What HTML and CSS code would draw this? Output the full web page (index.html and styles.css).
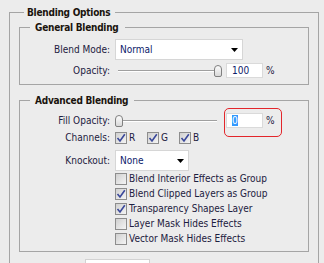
FILE: index.html
```html
<!DOCTYPE html>
<html lang="en">
<head>
  <meta charset="UTF-8">
  <title>Blending Options</title>
  <meta name="viewport" content="width=device-width, initial-scale=1.0">
  <link rel="stylesheet" href="styles.css">
</head>
<body>

  <fieldset class="group outer">
    <legend>Blending Options</legend>

    <fieldset class="group">
      <legend>General Blending</legend>
      <div class="rows general">
        <div class="row">
          <span class="label">Blend Mode:</span>
          <div class="select wide">
            <span>Normal</span>
            <svg class="arrow" width="7" height="4" viewBox="0 0 7 4"><polygon points="0,0 7,0 3.5,4"/></svg>
          </div>
        </div>
        <div class="row">
          <span class="label">Opacity:</span>
          <div class="slider"><span class="thumb" style="left: 99px"></span></div>
          <span class="field">100</span>
          <span class="unit">%</span>
        </div>
      </div>
    </fieldset>

    <fieldset class="group advanced-group">
      <legend>Advanced Blending</legend>
      <div class="rows advanced">
        <div class="row">
          <span class="label">Fill Opacity:</span>
          <div class="slider"><span class="thumb" style="left: 0px"></span></div>
          <span class="marked">
            <span class="field"><span class="sel">0</span></span>
            <span class="unit">%</span>
          </span>
        </div>
        <div class="row channels-row">
          <span class="label">Channels:</span>
          <span class="chan">
            <span class="box"><svg viewBox="0 0 10 10"><path d="M1.5 5 L4 8 L8.8 1.2"/></svg></span>R
          </span>
          <span class="chan">
            <span class="box"><svg viewBox="0 0 10 10"><path d="M1.5 5 L4 8 L8.8 1.2"/></svg></span>G
          </span>
          <span class="chan">
            <span class="box"><svg viewBox="0 0 10 10"><path d="M1.5 5 L4 8 L8.8 1.2"/></svg></span>B
          </span>
        </div>
        <div class="row knock-row">
          <span class="label">Knockout:</span>
          <div class="select narrow">
            <span>None</span>
            <svg class="arrow" width="7" height="4" viewBox="0 0 7 4"><polygon points="0,0 7,0 3.5,4"/></svg>
          </div>
        </div>
        <div class="checks">
          <div class="check"><span class="box"></span>Blend Interior Effects as Group</div>
          <div class="check"><span class="box"><svg viewBox="0 0 10 10"><path d="M1.5 5 L4 8 L8.8 1.2"/></svg></span>Blend Clipped Layers as Group</div>
          <div class="check"><span class="box"><svg viewBox="0 0 10 10"><path d="M1.5 5 L4 8 L8.8 1.2"/></svg></span>Transparency Shapes Layer</div>
          <div class="check"><span class="box"></span>Layer Mask Hides Effects</div>
          <div class="check"><span class="box"></span>Vector Mask Hides Effects</div>
        </div>
      </div>
    </fieldset>

    <div class="button-stub"></div>
  </fieldset>

</body>
</html>
```

FILE: styles.css
```css
html {
  overflow: hidden;
}

body {
  margin: 0;
  background: #ececec;
  font-family: "DejaVu Sans Condensed", "Liberation Sans", sans-serif;
  font-size: 10px;
  line-height: 12px;
  color: #1c2040;
}

.group {
  margin: 0 9px;
  padding: 0;
  border: 1px solid #a5a5a5;
  min-width: 0;
}

.group legend {
  margin-left: 10px;
  padding: 0 6px 0 5px;
  line-height: 15px;
  font-weight: bold;
  letter-spacing: -0.25px;
  color: #1a140e;
}

.outer {
  width: 310px;
  box-sizing: border-box;
  margin: 5px 0 0 9px;
}

.outer > legend {
  margin-left: 14px;
  padding: 0 5px 0 3px;
}

.advanced-group {
  margin-top: 8px;
}

.rows {
  display: flex;
  flex-direction: column;
}

.general {
  padding: 4px 0 6px;
  gap: 3px;
}

.advanced {
  padding: 5px 0 5px;
}

.row {
  display: flex;
  align-items: center;
}

.label {
  width: 90px;
  margin-right: 5px;
  text-align: right;
}

.channels-row {
  margin-top: 4px;
}

.knock-row {
  margin-top: 6px;
}

/* dropdowns */
.select {
  box-sizing: border-box;
  height: 21px;
  display: flex;
  align-items: center;
  justify-content: space-between;
  padding: 0 4px;
  background: #fff;
  border: 1px solid #d6d6d6;
  color: #0c1a6a;
}

.select.wide {
  width: 128px;
}

.select.narrow {
  width: 74px;
}

.arrow {
  fill: #000;
  margin-top: 1px;
}

/* sliders */
.slider {
  position: relative;
  width: 107px;
  height: 15px;
  margin-right: 4px;
  background:
    linear-gradient(#9f9f9f, #9f9f9f) 3px 7px / 99px 1px no-repeat,
    linear-gradient(#fff, #fff) 3px 8px / 99px 1px no-repeat;
}

.thumb {
  position: absolute;
  top: 2px;
  width: 8px;
  height: 12px;
  box-sizing: border-box;
  border: 1px solid #808080;
  border-radius: 4px 4px 2px 2px;
  background: linear-gradient(#fdfdfd, #d8d8d8);
}

.field {
  box-sizing: border-box;
  width: 37px;
  height: 15px;
  padding-left: 5px;
  line-height: 13px;
  background: #fff;
  border: 1px solid #dadada;
  color: #0c1a6a;
}

.sel {
  background: #3399ff;
  color: #fff;
}

.unit {
  margin-left: 3px;
}

.marked {
  position: relative;
  display: flex;
  align-items: center;
}

.marked::after {
  content: "";
  position: absolute;
  top: -5px;
  bottom: -9px;
  left: -2px;
  right: -7px;
  border: 1px solid #e3262b;
  border-radius: 5px;
}

/* checkboxes */
.box {
  flex: none;
  display: flex;
  width: 12px;
  height: 12px;
  box-sizing: border-box;
  border: 1px solid #8d8d8d;
  background: linear-gradient(135deg, #d0d0d0, #f4f4f4);
}

.box svg {
  width: 10px;
  height: 10px;
}

.box path {
  fill: none;
  stroke: #3a489a;
  stroke-width: 1.6;
}

.chan {
  display: flex;
  align-items: center;
  gap: 2px;
  width: 32px;
}

.checks {
  margin-left: 95px;
}

.check {
  display: flex;
  align-items: center;
  gap: 2px;
  height: 15px;
}

.button-stub {
  margin: 7px 0 0 75px;
  width: 65px;
  height: 20px;
  box-sizing: border-box;
  background: #fff;
  border: 1px solid #d2d2d2;
}
```
